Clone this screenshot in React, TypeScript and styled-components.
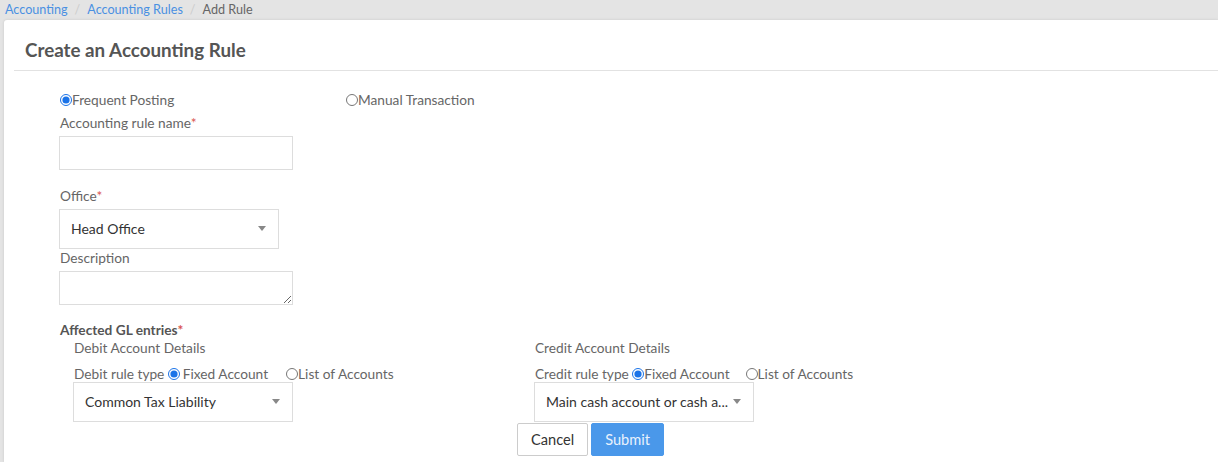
import React from 'react';
import styled, { createGlobalStyle } from 'styled-components';

const GlobalStyle = createGlobalStyle`
	html, body {
		margin: 0;
		padding: 0;
		background: #e4e4e4;
		font-family: Lato, 'Noto Sans', sans-serif;
		color: #666;
		overflow: hidden;
	}
	* {
		box-sizing: border-box;
	}
`;

const Breadcrumb = styled.div`
	height: 20px;
	padding: 1px 5px 0;
	font-size: 12.6px;
	line-height: 18px;
	display: flex;
	gap: 7px;
`;

const Crumb = styled.span<{ $active?: boolean }>`
	color: ${(p) => (p.$active ? '#666' : '#4a90e2')};
`;

const Sep = styled.span`
	color: #ccc;
`;

const Panel = styled.div`
	margin-left: 4px;
	background: #fff;
	border-radius: 3px 0 0 0;
	box-shadow: 0 0 3px rgba(0, 0, 0, 0.12);
	height: 442px;
`;

const Header = styled.div`
	margin-left: 10px;
	height: 51px;
	padding: 8px 0 0 11px;
	border-bottom: 1px solid #e2e2e2;
	display: flex;
	align-items: center;
`;

const Title = styled.h3`
	margin: 0;
	font-size: 18.8px;
	font-weight: 700;
	color: #555;
`;

const Body = styled.form`
	padding: 20px 0 0 56px;
`;

const RadioRow = styled.div`
	display: grid;
	grid-template-columns: 286px auto;
	height: 18px;
`;

const RadioLabel = styled.label<{ $gap?: number }>`
	display: inline-flex;
	align-items: center;
	font-size: 13.7px;
	line-height: 18px;
	color: #666;
	margin-right: ${(p) => p.$gap ?? 0}px;
`;

const Radio = styled.input.attrs({ type: 'radio' })<{ $space?: number }>`
	margin: 0 ${(p) => p.$space ?? 0}px 0 0;
	width: 12px;
	height: 12px;
	accent-color: #1a73e8;
`;

const Label = styled.div<{ $top?: number; $bold?: boolean }>`
	margin-top: ${(p) => p.$top ?? 0}px;
	font-size: 13.7px;
	line-height: 18px;
	color: ${(p) => (p.$bold ? '#555' : '#666')};
	font-weight: ${(p) => (p.$bold ? 700 : 400)};
`;

const Req = styled.span`
	color: #d9534f;
`;

const TextInput = styled.input`
	display: block;
	margin: 4px 0 0 -1px;
	width: 234px;
	height: 34px;
	border: 1px solid #ddd;
	border-radius: 0;
	outline: none;
`;

const TextArea = styled.textarea`
	display: block;
	margin: 4px 0 0 -1px;
	width: 234px;
	height: 34px;
	border: 1px solid #ddd;
	resize: vertical;
	outline: none;
`;

const SelectBox = styled.div<{ $top?: number }>`
	margin: ${(p) => p.$top ?? 0}px 0 0 -1px;
	width: 220px;
	height: 40px;
	border: 1px solid #ddd;
	display: flex;
	align-items: center;
	justify-content: space-between;
	padding: 0 12px 2px 11px;
	font-size: 14px;
	color: #333;
`;

const Caret = styled.span`
	width: 0;
	height: 0;
	border-left: 4px solid transparent;
	border-right: 4px solid transparent;
	border-top: 5px solid #888;
`;

const GlGrid = styled.div`
	display: grid;
	grid-template-columns: 461px 461px;
	padding-left: 14px;
`;

const RuleRow = styled.div`
	margin-top: 8px;
	height: 17px;
	display: flex;
	align-items: center;
	font-size: 13.7px;
	line-height: 18px;
	color: #666;
`;

const Buttons = styled.div`
	margin-top: 1px;
	display: flex;
	gap: 3px;
	padding-left: 457px;
`;

const Button = styled.button<{ $primary?: boolean }>`
	height: 33px;
	padding: 0 13px;
	font-family: inherit;
	font-size: 14.6px;
	border-radius: 2px;
	border: 1px solid ${(p) => (p.$primary ? '#4a98ea' : '#ccc')};
	background: ${(p) => (p.$primary ? '#4a98ea' : '#fff')};
	color: ${(p) => (p.$primary ? '#e8f2fd' : '#333')};
`;

interface AccountProps {
	title: string;
	rule: string;
	value: string;
	spaced: boolean;
	name: string;
}

const AccountColumn = ({ title, rule, value, spaced, name }: AccountProps) => (
	<div>
		<Label>{title}</Label>
		<RuleRow>
			{rule}&nbsp;
			<RadioLabel $gap={spaced ? 18 : 16}>
				<Radio name={name} defaultChecked $space={spaced ? 3 : 0} />
				Fixed Account
			</RadioLabel>
			<RadioLabel>
				<Radio name={name} />
				List of Accounts
			</RadioLabel>
		</RuleRow>
		<SelectBox>
			<span>{value}</span>
			<Caret />
		</SelectBox>
	</div>
);

const App = () => (
	<>
		<GlobalStyle />
		<Breadcrumb>
			<Crumb>Accounting</Crumb>
			<Sep>/</Sep>
			<Crumb>Accounting Rules</Crumb>
			<Sep>/</Sep>
			<Crumb $active>Add Rule</Crumb>
		</Breadcrumb>
		<Panel>
			<Header>
				<Title>Create an Accounting Rule</Title>
			</Header>
			<Body>
				<RadioRow>
					<RadioLabel>
						<Radio name="kind" defaultChecked />
						Frequent Posting
					</RadioLabel>
					<RadioLabel>
						<Radio name="kind" />
						Manual Transaction
					</RadioLabel>
				</RadioRow>
				<Label $top={5}>
					Accounting rule name<Req>*</Req>
				</Label>
				<TextInput />
				<Label $top={17}>
					Office<Req>*</Req>
				</Label>
				<SelectBox $top={4}>
					<span>Head Office</span>
					<Caret />
				</SelectBox>
				<Label>Description</Label>
				<TextArea />
				<Label $top={16} $bold>
					Affected GL entries<Req>*</Req>
				</Label>
				<GlGrid>
					<AccountColumn
						title="Debit Account Details"
						rule="Debit rule type"
						value="Common Tax Liability"
						spaced
						name="debit"
					/>
					<AccountColumn
						title="Credit Account Details"
						rule="Credit rule type"
						value="Main cash account or cash a..."
						spaced={false}
						name="credit"
					/>
				</GlGrid>
				<Buttons>
					<Button type="button">Cancel</Button>
					<Button type="button" $primary>
						Submit
					</Button>
				</Buttons>
			</Body>
		</Panel>
	</>
);

export default App;
